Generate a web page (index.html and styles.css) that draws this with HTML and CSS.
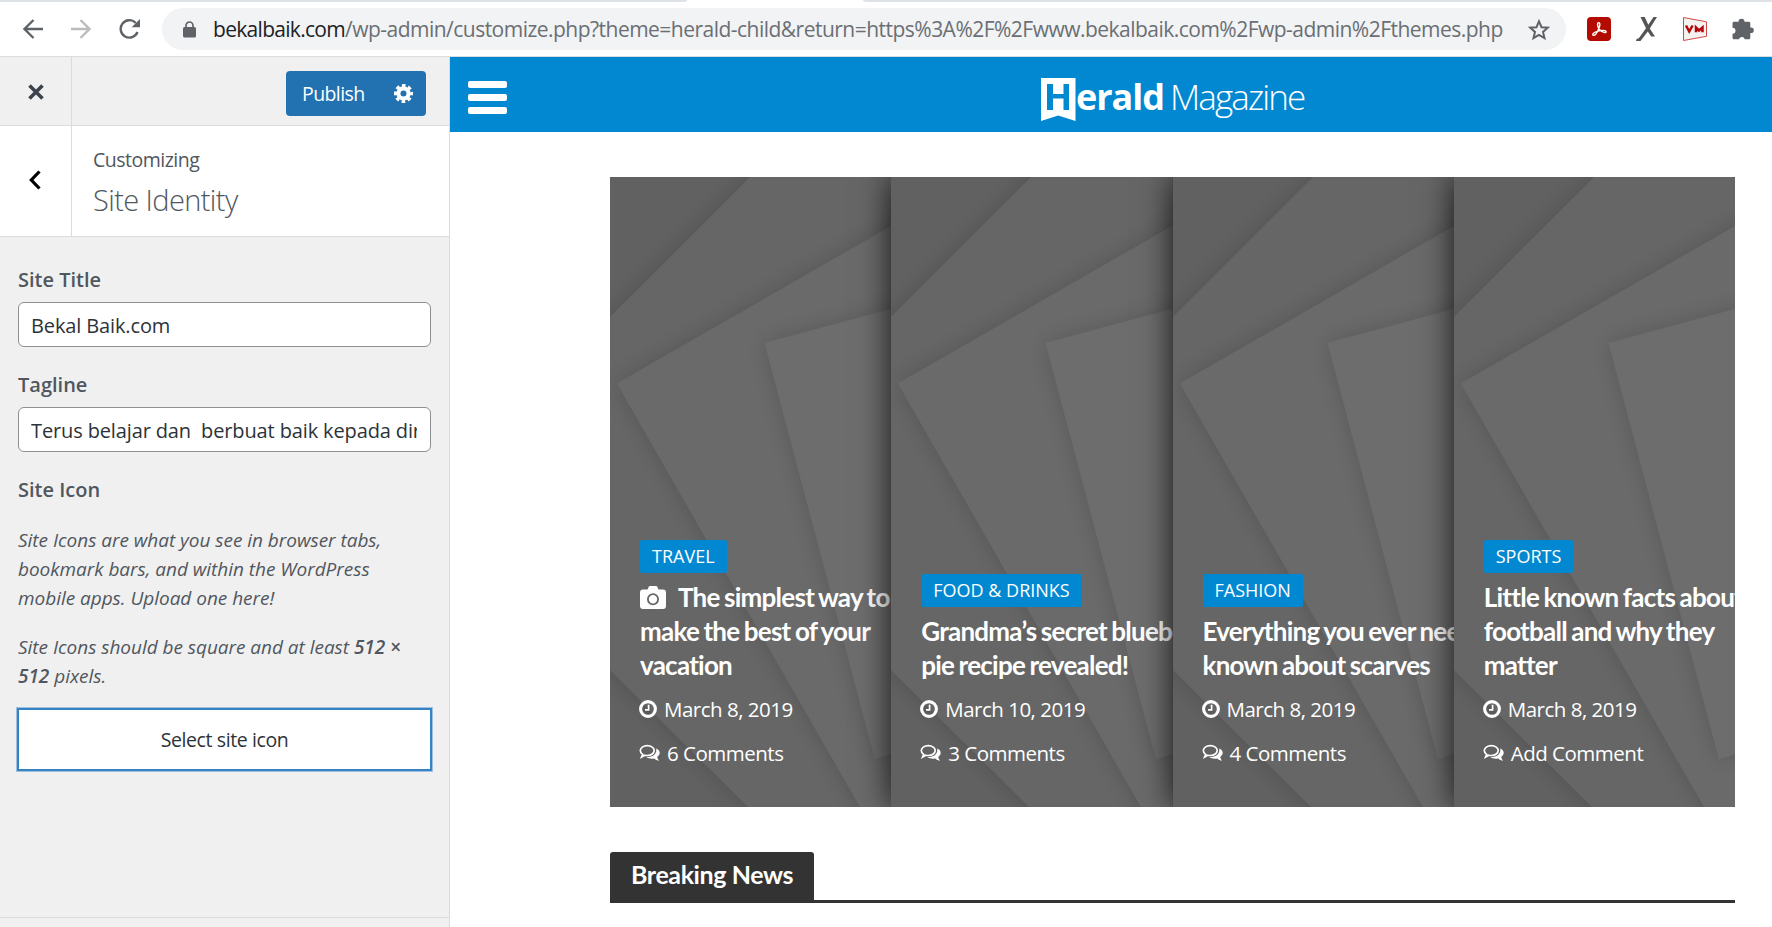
FILE: index.html
```html
<!DOCTYPE html>
<html lang="en">
<head>
    <meta charset="UTF-8">
    <meta name="viewport" content="width=device-width, initial-scale=1.0">
    <title>Customize: Bekal Baik.com</title>
    <link rel="stylesheet" href="styles.css">
</head>
<body>

    <svg class="sprite">
        <defs>
            <filter id="soft" x="-20%" y="-20%" width="140%" height="140%">
                <feDropShadow dx="0" dy="0" stdDeviation="11" flood-color="#000" flood-opacity="0.17"/>
            </filter>
        </defs>
        <symbol id="paper" viewBox="0 0 281 630" preserveAspectRatio="none">
            <rect width="281" height="630" fill="#616161"/>
            <polygon points="-100,240 140,0 300,-160 700,300 400,890 138,630 0,493 -100,394" fill="#666" filter="url(#soft)"/>
            <polygon points="7,206.5 281,49 500,-77 700,400 400,891 250,630" fill="#6a6a6a" filter="url(#soft)"/>
            <polygon points="154.6,166 281,132 420,94 530,500 264.8,582" fill="#6d6d6d" filter="url(#soft)"/>
        </symbol>
        <symbol id="clock" viewBox="0 0 18 18">
            <circle cx="9" cy="9" r="7.4" fill="none" stroke="#fff" stroke-width="3.1"/>
            <path d="M9.6 4.8v5H6" fill="none" stroke="#fff" stroke-width="1.7"/>
        </symbol>
        <symbol id="comments" viewBox="0 0 21 18">
            <path d="M8.3 1.7c4 0 6.9 2.2 6.9 4.9s-2.9 4.9-6.9 4.9c-.9 0-1.7-.1-2.5-.3L2.6 13l1.1-2.6C2 9.5 1.3 8.2 1.3 6.6c0-2.7 3-4.9 7-4.900z" fill="none" stroke="#fff" stroke-width="1.7"/>
            <path d="M17.3 4.4c2 1 3.4 2.5 3.4 4.4 0 1.7-1 3.1-2.5 4.1.3 1.5 1 2.6 2 3.8-2 0-3.600-.8-4.800-2.200-3.200.6-6 .1-8.100-1.400 5.700.3 10-2.700 10-6.800z" fill="#fff"/>
        </symbol>
    </svg>

    <div class="browser">
        <div class="tabs">
            <span class="tab-left"></span>
            <span class="tab-right"></span>
        </div>
        <div class="toolbar">
            <svg class="nav" width="20" height="20" viewBox="0 0 20 20"><path d="M20 10H2M10.5 1L1.5 10l9 9" fill="none" stroke="#5f6368" stroke-width="2.3"/></svg>
            <svg class="nav" width="20" height="20" viewBox="0 0 20 20"><path d="M0 10h18M9.5 1l9 9-9 9" fill="none" stroke="#babcbe" stroke-width="2.3"/></svg>
            <svg class="nav reload" width="22" height="20" viewBox="0 0 22 20"><path d="M18.5 13A8.7 8.7 0 1 1 16.8 4" fill="none" stroke="#5f6368" stroke-width="2.4"/><path d="M21 0v8.3h-8.3z" fill="#5f6368"/></svg>
            <div class="address">
                <svg width="13" height="17" viewBox="0 0 13 17"><path d="M3 7V4.5a3.5 3.5 0 0 1 7 0V7" fill="none" stroke="#5f6368" stroke-width="1.7"/><rect y="6" width="13" height="10.5" rx="1.5" fill="#5f6368"/></svg>
                <div class="url"><span class="host">bekalbaik.com</span>/wp-admin/customize.php?theme=herald-child&amp;return=https%3A%2F%2Fwww.bekalbaik.com%2Fwp-admin%2Fthemes.php</div>
                <svg class="star" width="22" height="21" viewBox="0 0 22 21"><path d="M11 2.3l2.500 5.900 6.300.5-4.800 4.200 1.500 6.200-5.500-3.300-5.500 3.300L7 12.900 2.200 8.700l6.300-.5z" fill="none" stroke="#5f6368" stroke-width="2"/></svg>
            </div>
            <div class="extensions">
                <svg width="24" height="24" viewBox="0 0 24 24"><rect width="24" height="24" rx="4" fill="#b30b00"/><path d="M12 12.3C10.3 8.800 10 5.700 11.700 5.700c1.800 0 1.300 3-.1 6.300-1.500 3.700-3.500 6.900-5.300 6.300-1.600-1 .8-3.200 4.700-4.200 3.600-1 8-1 8.100.6 0 1.700-3.500.9-7.100-2.400z" fill="none" stroke="#fff" stroke-width="1.4"/></svg>
                <svg width="22" height="24" viewBox="0 0 22 24"><path d="M4.500 0h4.200l3.600 7.800L17.500 0H21l-7.200 11.400 5.200 8.200h-3.800L11.800 14.500 4.500 24H0l.8-2.200 2-.6L10 11.300z" fill="#555"/></svg>
                <svg width="24" height="24" viewBox="0 0 24 24"><path d="M.5.5l23 4.3v14.500L.5 23.500z" fill="#f4f1f1" stroke="#d2474a"/><path d="M3 8.500l3.200 6 3.400-6M13 15.300v-4.800l3 3 3.500-3v4.800" fill="none" stroke="#b3060b" stroke-width="2.5"/></svg>
                <svg width="22" height="22" viewBox="0 0 22 22"><path d="M6.500 3.700a3 3 0 0 1 6 0h4.300c.9 0 1.500.6 1.500 1.500v4.300h.7a2.800 2.800 0 0 1 0 5.600h-.7v4.700c0 .9-.6 1.500-1.500 1.500h-4a3 3 0 0 0-5.800 0H2c-.9 0-1.500-.6-1.500-1.500v-4a3 3 0 0 0 0-6V5.200c0-.9.6-1.500 1.500-1.500z" fill="#5f6368"/></svg>
            </div>
        </div>
    </div>

    <div class="page">
        <div class="sidebar">
            <div class="actions">
                <div class="side-btn close"><svg width="16" height="16" viewBox="0 0 16 16"><path d="M1.5 1.5l13 13M14.5 1.5l-13 13" stroke="#3c434a" stroke-width="3.6"/></svg></div>
                <div class="publish">
                    <span class="publish-text">Publish</span>
                    <svg width="19" height="19" viewBox="0 0 20 20"><circle cx="10" cy="10" r="5.4" fill="none" stroke="#fff" stroke-width="4.4"/><circle cx="10" cy="10" r="8.2" fill="none" stroke="#fff" stroke-width="3.6" stroke-dasharray="3.7 2.74" stroke-dashoffset="1.85"/></svg>
                </div>
            </div>
            <div class="section-head">
                <div class="side-btn back"><svg width="12" height="20" viewBox="0 0 12 20"><path d="M10.5 1.5L2.3 10l8.2 8.5" fill="none" stroke="#000" stroke-width="3.2"/></svg></div>
                <div class="section-title">
                    <span class="small">Customizing</span>
                    <span class="big">Site Identity</span>
                </div>
            </div>
            <div class="controls">
                <div class="label">Site Title</div>
                <div class="input"><span>Bekal Baik.com</span></div>
                <div class="label">Tagline</div>
                <div class="input"><span>Terus belajar dan&nbsp; berbuat baik kepada diri sendiri</span></div>
                <div class="label">Site Icon</div>
                <p class="l1">Site Icons are what you see in browser tabs,<br>bookmark bars, and within the WordPress<br>mobile apps. Upload one here!</p>
                <p>Site Icons should be square and at least <b>512 &times;<br>512</b> pixels.</p>
                <div class="select">Select site icon</div>
            </div>
            <div class="side-footer"></div>
        </div>

        <div class="preview">
            <div class="header">
                <div class="burger"><span></span><span></span><span></span></div>
                <div class="logo">
                    <svg width="35" height="43" viewBox="0 0 35 43"><path d="M0 0h34.5v43L17.2 37.5 0 43z" fill="#fff"/><path d="M6 6h6v10h10.5V6H28v26h-5.500V20.500H12V32H6z" fill="#0288d1"/></svg>
                    <span class="erald">erald</span>
                    <span class="magazine">Magazine</span>
                </div>
            </div>

            <div class="slider">
                <div class="slide">
                    <svg class="bg"><use href="#paper"/></svg>
                    <div class="entry">
                        <span class="cat">TRAVEL</span>
                        <div class="title"><svg class="camera" width="26" height="23" viewBox="0 0 26 23"><path fill-rule="evenodd" d="M3 3.5h4.500l1-2.300C8.800.5 9.500 0 10.500 0h5c1 0 1.700.5 2 1.200l1 2.300H23a3 3 0 0 1 3 3V20a3 3 0 0 1-3 3H3a3 3 0 0 1-3-3V6.500a3 3 0 0 1 3-3zM13 7.200a6 6 0 1 0 0 12 6 6 0 0 0 0-12zm0 1.800a4.200 4.200 0 1 1 0 8.400 4.200 4.200 0 0 1 0-8.400z" fill="#fff"/></svg>The simplest way to<br>make the best of your<br>vacation</div>
                        <div class="meta"><svg class="clock"><use href="#clock"/></svg>March 8, 2019</div>
                        <div class="meta"><svg class="comments"><use href="#comments"/></svg>6 Comments</div>
                    </div>
                </div>
                <div class="slide">
                    <svg class="bg"><use href="#paper"/></svg>
                    <div class="entry">
                        <span class="cat">FOOD &amp; DRINKS</span>
                        <div class="title">Grandma’s secret blueberry<br>pie recipe revealed!</div>
                        <div class="meta"><svg class="clock"><use href="#clock"/></svg>March 10, 2019</div>
                        <div class="meta"><svg class="comments"><use href="#comments"/></svg>3 Comments</div>
                    </div>
                </div>
                <div class="slide">
                    <svg class="bg"><use href="#paper"/></svg>
                    <div class="entry">
                        <span class="cat">FASHION</span>
                        <div class="title">Everything you ever needed<br>known about scarves</div>
                        <div class="meta"><svg class="clock"><use href="#clock"/></svg>March 8, 2019</div>
                        <div class="meta"><svg class="comments"><use href="#comments"/></svg>4 Comments</div>
                    </div>
                </div>
                <div class="slide">
                    <svg class="bg"><use href="#paper"/></svg>
                    <div class="entry">
                        <span class="cat">SPORTS</span>
                        <div class="title">Little known facts about<br>football and why they<br>matter</div>
                        <div class="meta"><svg class="clock"><use href="#clock"/></svg>March 8, 2019</div>
                        <div class="meta"><svg class="comments"><use href="#comments"/></svg>Add Comment</div>
                    </div>
                </div>
            </div>

            <div class="module-head">
                <span class="module-title">Breaking News</span>
            </div>
        </div>
    </div>

</body>
</html>
```
FILE: styles.css
```css
* {
    box-sizing: border-box;
}
body {
    margin: 0;
    height: 927px;
    overflow: hidden;
    background: #fff;
    font-family: "Open Sans", sans-serif;
    white-space: nowrap;
}
svg {
    flex: none;
    display: block;
}
.sprite {
    position: absolute;
    width: 0;
    height: 0;
}

/* browser bar */
.browser {
    height: 57px;
    border-bottom: 1px solid #dadce0;
}
.tabs {
    display: flex;
    justify-content: space-between;
    height: 2px;
}
.tab-left {
    width: 687px;
    background: #dee1e6;
    border-bottom-right-radius: 5px 2px;
}
.tab-right {
    width: 909px;
    background: #dee1e6;
    border-bottom-left-radius: 5px 2px;
}
.toolbar {
    display: flex;
    align-items: center;
    height: 54px;
    padding-left: 23px;
}
.nav {
    margin-right: 28px;
}
.reload {
    margin-right: 21px;
}
.address {
    display: flex;
    align-items: center;
    width: 1404px;
    height: 42px;
    padding: 0 16px 0 21px;
    background: #f1f3f4;
    border-radius: 21px;
}
.url {
    flex: 1;
    margin-left: 17px;
    font-size: 21px;
    letter-spacing: -0.52px;
    color: #6b6f74;
}
.host {
    letter-spacing: -0.7px;
    color: #202124;
}
.extensions {
    display: flex;
    align-items: center;
    gap: 25px;
    margin-left: 21px;
}

.page {
    display: flex;
    height: 870px;
}

/* customizer panel */
.sidebar {
    display: flex;
    flex-direction: column;
    width: 450px;
    background: #f0f0f1;
    border-right: 1px solid #dcdcde;
    color: #50575e;
}
.actions {
    display: flex;
    justify-content: space-between;
    align-items: center;
    height: 69px;
    padding-right: 23px;
    border-bottom: 1px solid #dcdcde;
}
.side-btn {
    display: flex;
    align-items: center;
    justify-content: center;
    width: 72px;
    height: 100%;
    border-right: 1px solid #dcdcde;
}
.close {
    padding-top: 2px;
}
.back {
    padding: 0 2px 2px 0;
}
.publish {
    display: flex;
    align-items: center;
    width: 140px;
    height: 45px;
    margin-top: 5px;
    padding-left: 16px;
    background: #2271b1;
    border-radius: 4px;
    color: #fff;
}
.publish-text {
    width: 92px;
    font-size: 19.5px;
    letter-spacing: -0.6px;
}
.section-head {
    display: flex;
    height: 111px;
    background: #fff;
    border-bottom: 1px solid #dcdcde;
}
.section-title {
    display: flex;
    flex-direction: column;
    padding: 19px 0 0 21px;
}
.small {
    font-size: 19.5px;
    line-height: 30px;
    letter-spacing: -0.5px;
}
.big {
    font-size: 29px;
    font-weight: 300;
    line-height: 49px;
    letter-spacing: -0.6px;
}
.controls {
    flex: 1;
    padding: 27px 18px 0;
}
.label {
    height: 38px;
    font-size: 20px;
    font-weight: 600;
    line-height: 32px;
}
.input {
    height: 45px;
    margin-bottom: 22px;
    padding: 0 13px 0 12px;
    background: #fff;
    border: 1px solid #8c8f94;
    border-radius: 6px;
    font-size: 20px;
    line-height: 45px;
    letter-spacing: -0.13px;
    color: #2c3338;
}
.input span {
    display: block;
    overflow: hidden;
}
.controls p {
    margin: 0 0 17px;
    font-size: 19px;
    font-style: italic;
    line-height: 29px;
    letter-spacing: -0.03px;
}
.controls p.l1 {
    margin: 14px 0 20px;
}
.controls b {
    font-weight: 600;
}
.select {
    height: 63px;
    margin: 0 -1px;
    background: #fff;
    border: 2px solid #3582c4;
    box-shadow: 0 0 0 1px #9fc0de;
    font-size: 19.5px;
    line-height: 60px;
    letter-spacing: -0.4px;
    text-align: center;
    color: #2c3338;
}
.side-footer {
    height: 10px;
    border-top: 1px solid #dcdcde;
}

/* site preview */
.preview {
    flex: 1;
}
.header {
    display: flex;
    height: 75px;
    padding-left: 18px;
    background: #0288d1;
    color: #fff;
}
.burger {
    display: flex;
    flex-direction: column;
    gap: 6px;
    width: 573px;
    padding-top: 24px;
}
.burger span {
    width: 39px;
    height: 7px;
    background: #fff;
    border-radius: 2px;
}
.logo {
    display: flex;
    padding-top: 21px;
}
.erald {
    width: 94px;
    font-size: 36px;
    font-weight: 700;
    line-height: 37px;
    letter-spacing: -1px;
}
.magazine {
    font-size: 35px;
    font-weight: 300;
    line-height: 37px;
    letter-spacing: -1.9px;
}
.slider {
    display: flex;
    width: 1125px;
    height: 630px;
    margin: 45px 0 45px 160px;
    overflow: hidden;
}
.slide {
    position: relative;
    display: grid;
    grid-template: 630px / 100%;
    width: 25%;
    background: #616161;
    box-shadow: 0 0 30px rgba(0, 0, 0, 0.8);
}
.bg,
.entry {
    grid-area: 1 / 1;
    overflow: hidden;
}
.bg {
    width: 100%;
    height: 630px;
}
.entry {
    display: flex;
    flex-direction: column;
    justify-content: flex-end;
    align-items: flex-start;
    padding: 0 0 32px 30px;
    color: #fff;
}
.cat {
    height: 33px;
    padding: 0 12px;
    background: #0288d1;
    border-radius: 2px;
    font-size: 18px;
    line-height: 33px;
    letter-spacing: 0;
}
.title {
    margin: 7px 0 5px;
    font-family: Lato, sans-serif;
    font-size: 26px;
    font-weight: 700;
    line-height: 34px;
    letter-spacing: -0.75px;
    word-spacing: -1.2px;
}
.camera {
    display: inline-block;
    margin-right: 12px;
    vertical-align: -2px;
}
.meta {
    display: flex;
    align-items: center;
    height: 44px;
    font-size: 20.5px;
    letter-spacing: -0.5px;
}
.clock {
    width: 18px;
    height: 18px;
    margin: -1px 7px 0 -1px;
}
.comments {
    width: 21px;
    height: 18px;
    margin: 0 7px 0 -1px;
}
.module-head {
    display: flex;
    width: 1125px;
    height: 51px;
    margin-left: 160px;
    border-bottom: 3px solid #333;
}
.module-title {
    width: 204px;
    padding-left: 21px;
    background: #333;
    border-radius: 3px 3px 0 0;
    font-family: Lato, sans-serif;
    font-size: 25px;
    font-weight: 700;
    line-height: 45px;
    letter-spacing: -0.4px;
    color: #fff;
}
```
